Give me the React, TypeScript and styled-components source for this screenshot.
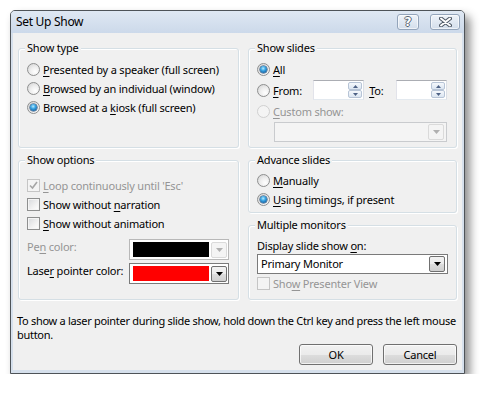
import React from 'react';
import styled, { createGlobalStyle } from 'styled-components';

const GlobalStyle = createGlobalStyle`
  body {
    margin: 0;
    background: #ffffff;
    font-family: "Segoe UI", "Noto Sans", sans-serif;
    font-size: 11px;
    letter-spacing: -0.2px;
    color: #000000;
  }
`;

const Page = styled.div`
  padding: 10px 0 0 10px;
`;

const Window = styled.div`
  width: 455px;
  height: 364px;
  box-sizing: border-box;
  border: 1px solid #4e5358;
  border-radius: 5px 5px 0 0;
  background: #d6e0ec;
  box-shadow: 5px 6px 10px rgba(0, 0, 0, 0.45);
  display: flex;
  flex-direction: column;
`;

const TitleBar = styled.div`
  height: 22px;
  flex-shrink: 0;
  display: flex;
  align-items: center;
  padding: 0 4px 0 5px;
  background: linear-gradient(#dfe8f3, #ccd9ea);
  border-radius: 4px 4px 0 0;
`;

const Title = styled.div`
  flex: 1;
  font-size: 12px;
  letter-spacing: -0.3px;
  line-height: 16px;
`;

const CaptionButtons = styled.div`
  display: flex;
  gap: 11px;
  align-self: flex-start;
  margin-top: 3px;
`;

const CaptionButton = styled.div<{ $w: number }>`
  width: ${({ $w }) => $w}px;
  height: 16px;
  box-sizing: border-box;
  border: 1px solid #93a4ba;
  border-radius: 3px;
  background: linear-gradient(#eef3f9, #d3deeb);
  box-shadow: inset 0 0 0 1px rgba(255, 255, 255, 0.6);
  display: flex;
  align-items: center;
  justify-content: center;
`;

const HelpGlyph = styled.span`
  font-family: "DejaVu Sans", sans-serif;
  font-weight: bold;
  font-size: 12px;
  line-height: 12px;
  color: #ffffff;
  text-shadow: 1px 0 #5a6470, -1px 0 #5a6470, 0 1px #5a6470, 0 -1px #5a6470;
`;

const Client = styled.div`
  flex: 1;
  margin: 0 2px 3px;
  background: #f0f0f0;
  padding: 15px 5px 5px;
  display: flex;
  flex-direction: column;
`;

const Columns = styled.div`
  display: grid;
  grid-template-columns: 221px 209px;
  column-gap: 9px;
`;

const Column = styled.div`
  display: flex;
  flex-direction: column;
  gap: 12px;
`;

const GroupBox = styled.div<{ $h: number }>`
  height: ${({ $h }) => $h}px;
  box-sizing: border-box;
  border: 1px solid #d5dfe5;
  border-radius: 3px;
  box-shadow: inset 1px 1px 0 #ffffff, 1px 1px 0 #ffffff;
  padding: 0 9px 0 8px;
  display: flex;
  flex-direction: column;
`;

const Legend = styled.div`
  align-self: flex-start;
  margin: -9px 0 0 -2px;
  padding: 0 2px;
  line-height: 16px;
  background: #f0f0f0;
`;

const Rows = styled.div<{ $top: number }>`
  display: flex;
  flex-direction: column;
  padding-top: ${({ $top }) => $top}px;
`;

const Row = styled.div<{ $h?: number; $disabled?: boolean }>`
  height: ${({ $h }) => $h ?? 19}px;
  display: flex;
  align-items: center;
  gap: 3px;
  color: ${({ $disabled }) => ($disabled ? '#959595' : '#000000')};
  white-space: nowrap;
`;

const Radio = styled.span<{ $checked?: boolean; $disabled?: boolean }>`
  width: 13px;
  height: 13px;
  box-sizing: border-box;
  flex-shrink: 0;
  border-radius: 50%;
  border: 1px solid ${({ $disabled }) => ($disabled ? '#d0d0d0' : '#8e8f8f')};
  background: ${({ $disabled }) =>
    $disabled
      ? '#f4f4f4'
      : 'radial-gradient(circle at 65% 70%, #ffffff 0%, #eeeeee 45%, #cfcfcf 100%)'};
  display: flex;
  align-items: center;
  justify-content: center;
  &::after {
    content: '';
    display: ${({ $checked }) => ($checked ? 'block' : 'none')};
    width: 7px;
    height: 7px;
    border-radius: 50%;
    background: radial-gradient(circle at 45% 35%, #b6ecff 0%, #35a0e0 40%, #0a3f7c 100%);
    box-shadow: 0 0 0 0.5px #1c3f66;
  }
`;

const Check = styled.span<{ $disabled?: boolean }>`
  width: 13px;
  height: 13px;
  box-sizing: border-box;
  flex-shrink: 0;
  border: 1px solid ${({ $disabled }) => ($disabled ? '#c5c5c5' : '#8e8f8f')};
  background: ${({ $disabled }) =>
    $disabled ? '#f4f4f4' : 'linear-gradient(135deg, #d7d9dc 0%, #f2f2f2 60%, #ffffff 100%)'};
  box-shadow: inset 0 0 0 1px ${({ $disabled }) => ($disabled ? '#f4f4f4' : '#f5f5f5')};
  display: flex;
  align-items: center;
  justify-content: center;
`;

const Key = styled.span`
  text-decoration: underline;
  text-underline-offset: 2px;
`;

const SpinBox = styled.div<{ $w: number }>`
  width: ${({ $w }) => $w}px;
  height: 20px;
  box-sizing: border-box;
  border: 1px solid #abadb3;
  border-color: #abadb3 #dbdfe6 #e3e9ef #e2e3ea;
  background: #ffffff;
  display: flex;
  justify-content: flex-end;
  padding: 1px;
`;

const SpinButtons = styled.div`
  width: 14px;
  display: flex;
  flex-direction: column;
`;

const SpinHalf = styled.div`
  flex: 1;
  box-sizing: border-box;
  border: 1px solid #b7c4d6;
  border-radius: 2px;
  background: linear-gradient(#f5f8fc, #dbe5f1);
  display: flex;
  align-items: center;
  justify-content: center;
`;

const FromLabel = styled.span`
  width: 37px;
`;

const ToLabel = styled.span`
  margin: 0 9px 0 2px;
`;

const Combo = styled.div<{ $disabled?: boolean; $w?: number; $indent?: number }>`
  width: ${({ $w }) => ($w ? `${$w}px` : 'auto')};
  height: 20px;
  margin-left: ${({ $indent }) => $indent ?? 0}px;
  box-sizing: border-box;
  border: 1px solid ${({ $disabled }) => ($disabled ? '#c9cbce' : '#7a7a7a')};
  background: ${({ $disabled }) => ($disabled ? '#f4f4f4' : '#ffffff')};
  display: flex;
  align-items: center;
  padding: 1px 2px 1px 3px;
`;

const ComboText = styled.span`
  flex: 1;
  line-height: 16px;
`;

const DropButton = styled.div<{ $disabled?: boolean }>`
  width: 16px;
  height: 16px;
  box-sizing: border-box;
  border: 1px solid ${({ $disabled }) => ($disabled ? '#dadada' : '#707070')};
  border-radius: 2px;
  background: ${({ $disabled }) =>
    $disabled ? '#f4f4f4' : 'linear-gradient(#f2f2f2 0%, #ebebeb 50%, #dddddd 51%, #cfcfcf 100%)'};
  display: flex;
  align-items: center;
  justify-content: center;
`;

const ColorRow = styled.div<{ $disabled?: boolean; $gap?: number }>`
  height: 21px;
  margin-top: ${({ $gap }) => $gap ?? 0}px;
  display: flex;
  justify-content: space-between;
  align-items: flex-start;
  color: ${({ $disabled }) => ($disabled ? '#959595' : '#000000')};
  white-space: nowrap;
`;

const ColorLabel = styled.span`
  line-height: 16px;
`;

const ColorPicker = styled.div<{ $disabled?: boolean }>`
  width: 100px;
  height: 21px;
  box-sizing: border-box;
  border: 1px solid ${({ $disabled }) => ($disabled ? '#b8b8b8' : '#7a7a7a')};
  background: #ffffff;
  display: flex;
  align-items: center;
  gap: 2px;
  padding: 2px 1px 2px 3px;
`;

const Swatch = styled.div<{ $color: string }>`
  flex: 1;
  height: 13px;
  background: ${({ $color }) => $color};
  border: 1px solid ${({ $color }) => $color};
`;

const Hint = styled.p`
  margin: 14px -4px 0 -1px;
  line-height: 14px;
  letter-spacing: -0.3px;
`;

const ButtonRow = styled.div`
  display: flex;
  justify-content: flex-end;
  gap: 10px;
  margin-top: 2px;
`;

const PushButton = styled.div`
  width: 74px;
  height: 21px;
  box-sizing: border-box;
  border: 1px solid #707070;
  border-radius: 3px;
  background: linear-gradient(#f2f2f2 0%, #ebebeb 50%, #dddddd 51%, #cfcfcf 100%);
  box-shadow: inset 0 0 0 1px rgba(255, 255, 255, 0.7);
  display: flex;
  align-items: center;
  justify-content: center;
  line-height: 16px;
`;

const Arrow: React.FC<{ color: string; up?: boolean; w?: number }> = ({ color, up, w = 7 }) => {
  const h = Math.ceil(w / 2);
  return (
    <svg width={w} height={h} viewBox={`0 0 ${w} ${h}`}>
      {up ? (
        <polygon points={`0,${h} ${w},${h} ${w / 2},0`} fill={color} />
      ) : (
        <polygon points={`0,0 ${w},0 ${w / 2},${h}`} fill={color} />
      )}
    </svg>
  );
};

const CheckMark: React.FC<{ color: string }> = ({ color }) => (
  <svg width="9" height="9" viewBox="0 0 9 9">
    <polyline points="1,4.5 3.5,7 8,1" fill="none" stroke={color} strokeWidth="1.6" />
  </svg>
);

const CloseGlyph = () => (
  <svg width="13" height="10" viewBox="0 0 13 10">
    <path d="M2 1.5 L11 8.5 M11 1.5 L2 8.5" stroke="#4f5966" strokeWidth="4" strokeLinecap="round" />
    <path d="M2 1.5 L11 8.5 M11 1.5 L2 8.5" stroke="#ffffff" strokeWidth="2" strokeLinecap="round" />
  </svg>
);

const Spin: React.FC<{ w: number }> = ({ w }) => (
  <SpinBox $w={w}>
    <SpinButtons>
      <SpinHalf>
        <Arrow color="#4d6185" up w={5} />
      </SpinHalf>
      <SpinHalf>
        <Arrow color="#4d6185" w={5} />
      </SpinHalf>
    </SpinButtons>
  </SpinBox>
);

const App = () => (
  <Page>
    <GlobalStyle />
    <Window>
      <TitleBar>
        <Title>Set Up Show</Title>
        <CaptionButtons>
          <CaptionButton $w={22}>
            <HelpGlyph>?</HelpGlyph>
          </CaptionButton>
          <CaptionButton $w={30}>
            <CloseGlyph />
          </CaptionButton>
        </CaptionButtons>
      </TitleBar>
      <Client>
        <Columns>
          <Column>
            <GroupBox $h={100}>
              <Legend>Show type</Legend>
              <Rows $top={4}>
                <Row>
                  <Radio />
                  <span>
                    <Key>P</Key>resented by a speaker (full screen)
                  </span>
                </Row>
                <Row>
                  <Radio />
                  <span>
                    <Key>B</Key>rowsed by an individual (window)
                  </span>
                </Row>
                <Row>
                  <Radio $checked />
                  <span>
                    Browsed at a <Key>k</Key>iosk (full screen)
                  </span>
                </Row>
              </Rows>
            </GroupBox>
            <GroupBox $h={140}>
              <Legend>Show options</Legend>
              <Rows $top={8}>
                <Row $disabled>
                  <Check $disabled>
                    <CheckMark color="#a6a6a6" />
                  </Check>
                  <span>
                    <Key>L</Key>oop continuously until 'Esc'
                  </span>
                </Row>
                <Row>
                  <Check />
                  <span>
                    Show without <Key>n</Key>arration
                  </span>
                </Row>
                <Row>
                  <Check />
                  <span>
                    <Key>S</Key>how without animation
                  </span>
                </Row>
              </Rows>
              <Rows $top={6}>
                <ColorRow $disabled>
                  <ColorLabel>
                    Pe<Key>n</Key> color:
                  </ColorLabel>
                  <ColorPicker $disabled>
                    <Swatch $color="#000000" />
                    <DropButton $disabled>
                      <Arrow color="#b0b0b0" />
                    </DropButton>
                  </ColorPicker>
                </ColorRow>
                <ColorRow $gap={3}>
                  <ColorLabel>
                    Lase<Key>r</Key> pointer color:
                  </ColorLabel>
                  <ColorPicker>
                    <Swatch $color="#ff0000" />
                    <DropButton>
                      <Arrow color="#000000" />
                    </DropButton>
                  </ColorPicker>
                </ColorRow>
              </Rows>
            </GroupBox>
          </Column>
          <Column>
            <GroupBox $h={100}>
              <Legend>Show slides</Legend>
              <Rows $top={4}>
                <Row>
                  <Radio $checked />
                  <span>
                    <Key>A</Key>ll
                  </span>
                </Row>
                <Row $h={22}>
                  <Radio />
                  <FromLabel>
                    <Key>F</Key>rom:
                  </FromLabel>
                  <Spin w={52} />
                  <ToLabel>
                    <Key>T</Key>o:
                  </ToLabel>
                  <Spin w={52} />
                </Row>
                <Row $h={21} $disabled>
                  <Radio $disabled />
                  <span>
                    <Key>C</Key>ustom show:
                  </span>
                </Row>
                <Row $h={20}>
                  <Combo $disabled $w={173} $indent={17}>
                    <ComboText />
                    <DropButton $disabled>
                      <Arrow color="#b0b0b0" />
                    </DropButton>
                  </Combo>
                </Row>
              </Rows>
            </GroupBox>
            <GroupBox $h={53}>
              <Legend>Advance slides</Legend>
              <Rows $top={3}>
                <Row>
                  <Radio />
                  <span>
                    <Key>M</Key>anually
                  </span>
                </Row>
                <Row>
                  <Radio $checked />
                  <span>
                    <Key>U</Key>sing timings, if present
                  </span>
                </Row>
              </Rows>
            </GroupBox>
            <GroupBox $h={75}>
              <Legend>Multiple monitors</Legend>
              <Rows $top={3}>
                <Row $h={18}>
                  <span>
                    Display slide show <Key>o</Key>n:
                  </span>
                </Row>
                <Combo $w={191}>
                  <ComboText>Primary Monitor</ComboText>
                  <DropButton>
                    <Arrow color="#000000" />
                  </DropButton>
                </Combo>
                <Row $disabled>
                  <Check $disabled />
                  <span>
                    Sho<Key>w</Key> Presenter View
                  </span>
                </Row>
              </Rows>
            </GroupBox>
          </Column>
        </Columns>
        <Hint>
          To show a laser pointer during slide show, hold down the Ctrl key and press the left mouse button.
        </Hint>
        <ButtonRow>
          <PushButton>OK</PushButton>
          <PushButton>Cancel</PushButton>
        </ButtonRow>
      </Client>
    </Window>
  </Page>
);

export default App;
